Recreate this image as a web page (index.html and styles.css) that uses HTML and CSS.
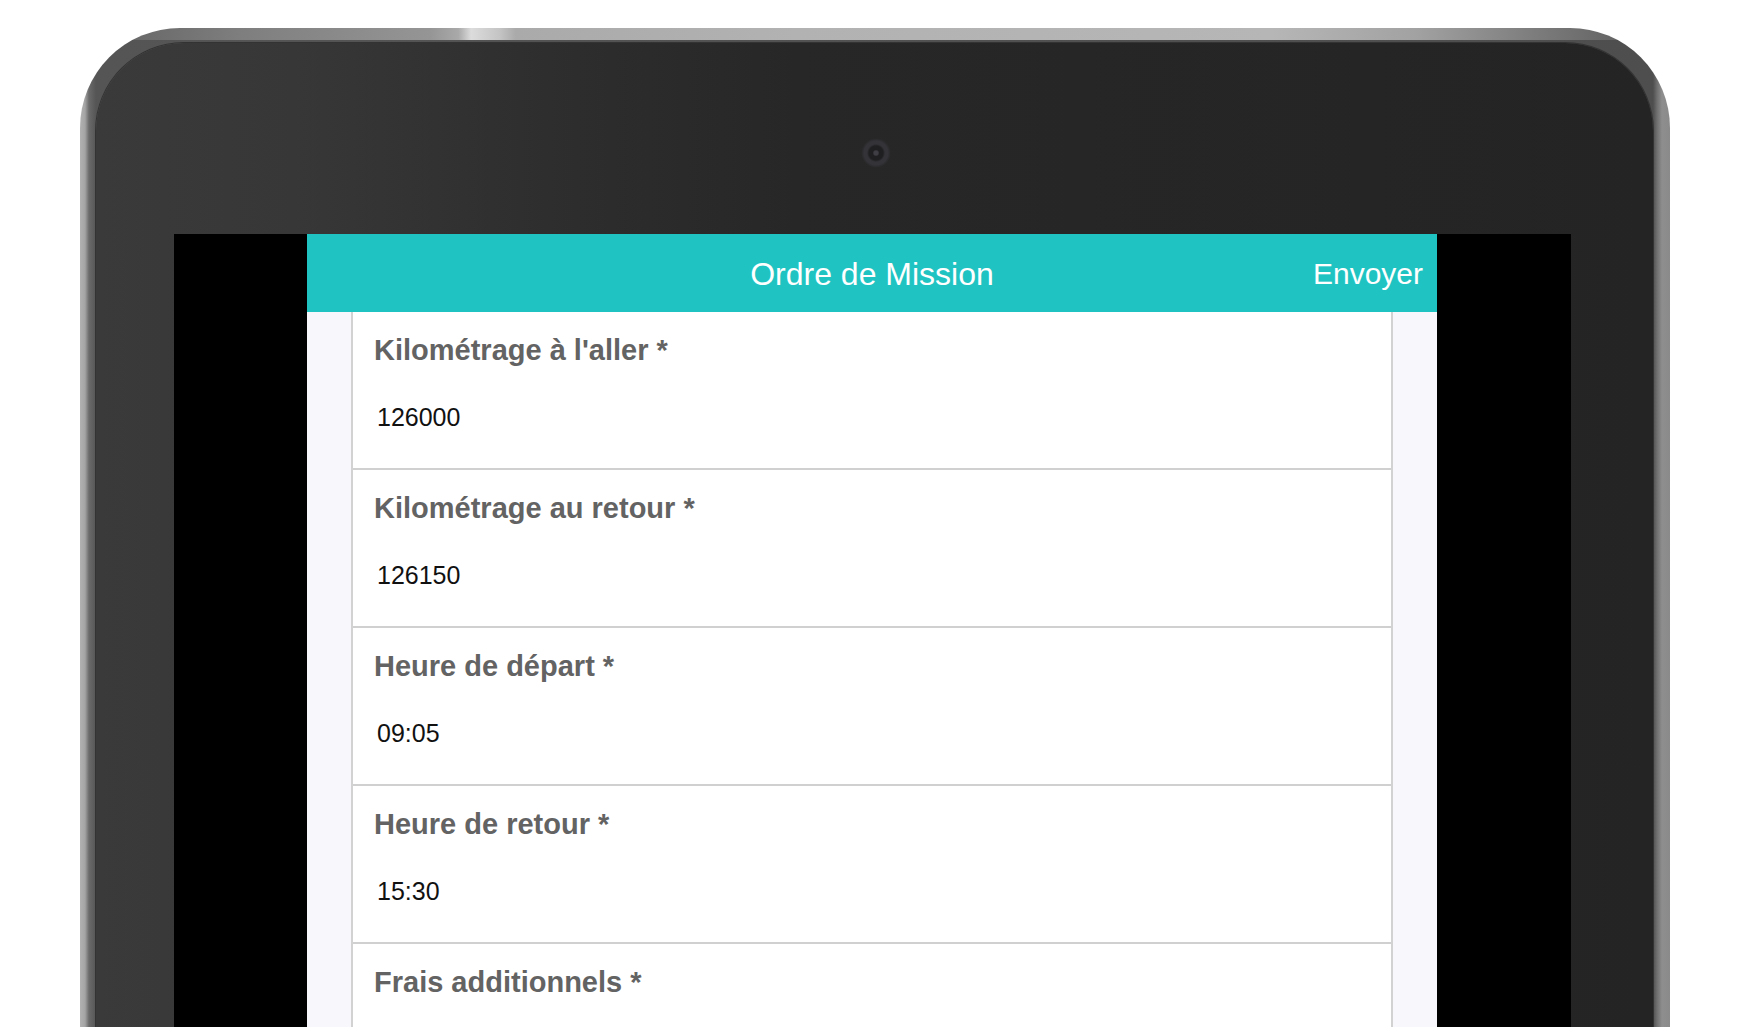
FILE: index.html
```html
<!DOCTYPE html>
<html lang="fr">
<head>
<meta charset="utf-8">
<title>Ordre de Mission</title>
<link rel="stylesheet" href="styles.css">
</head>
<body>
<div class="stage">
  <div class="tablet">
    <div class="bezel">
      <div class="bezel-top"><span class="camera"></span></div>
      <div class="screen">
        <div class="app">
          <header class="bar">
            <span class="bar-side"></span>
            <h1 class="bar-title">Ordre de Mission</h1>
            <button class="bar-action" type="button">Envoyer</button>
          </header>
          <main class="content">
            <div class="card">
              <div class="row">
                <p class="label">Kilométrage à l'aller *</p>
                <div class="value">126000</div>
              </div>
              <div class="row">
                <p class="label">Kilométrage au retour *</p>
                <div class="value">126150</div>
              </div>
              <div class="row">
                <p class="label">Heure de départ *</p>
                <div class="value">09:05</div>
              </div>
              <div class="row">
                <p class="label">Heure de retour *</p>
                <div class="value">15:30</div>
              </div>
              <div class="row">
                <p class="label">Frais additionnels *</p>
                <div class="value"></div>
              </div>
            </div>
          </main>
        </div>
      </div>
    </div>
  </div>
</div>
</body>
</html>
```

FILE: styles.css
```css
html, body {
  margin: 0;
  padding: 0;
  background: #ffffff;
  overflow: hidden;
  height: 100%;
}

body {
  font-family: "Liberation Sans", Arial, sans-serif;
}

.stage {
  padding: 28px 0 0 80px;
}

.tablet {
  width: 1590px;
  height: 1100px;
  box-sizing: border-box;
  padding: 15px 17px 0 16px;
  border-radius: 100px 100px 0 0;
  display: flex;
  flex-direction: column;
  background:
    linear-gradient(90deg,
      #5e5e5e 0%,
      #7e7e7e 10%,
      #959595 22%,
      #a9a9a9 23.8%,
      #dcdcdc 24.6%,
      #c4c4c4 26.4%,
      #aaaaaa 27.4%,
      #b2b2b2 45%,
      #b6b6b6 75%,
      #a2a2a2 84%,
      #7a7a7a 92%,
      #555555 100%) top left / 100% 12px no-repeat,
    linear-gradient(90deg,
      #b2b2b2 0,
      #a4a4a4 5px,
      #6a6a6a 9px,
      #555555 16px,
      #4e4e4e calc(100% - 17px),
      #6f6f6f calc(100% - 13px),
      #8e8e8e calc(100% - 8px),
      #8a8a8a 100%);
}

.bezel {
  flex: 1;
  display: flex;
  flex-direction: column;
  border-radius: 88px 88px 0 0;
  background: linear-gradient(90deg,
    #3a3a3a 0,
    #373737 200px,
    #2d2d2d 480px,
    #272727 700px,
    #242424 100%);
  box-shadow: 0 0 0 1px #333333;
}

.bezel-top {
  height: 191px;
  box-sizing: border-box;
  padding-top: 95px;
  display: flex;
  justify-content: center;
}

.camera {
  width: 30px;
  height: 30px;
  margin-left: 3px;
  border-radius: 50%;
  background: radial-gradient(circle,
    #3e3e44 0 2px,
    #1f1f21 3.5px 7px,
    #333338 9px 12px,
    #2a2a2c 14px,
    #262626 15px);
}

.screen {
  flex: 1;
  margin: 0 82px 0 78px;
  background: #000000;
  display: flex;
}

.app {
  width: 1130px;
  margin-left: 133px;
  display: flex;
  flex-direction: column;
  background: #f8f8fc;
}

.bar {
  height: 78px;
  box-sizing: border-box;
  padding: 20px 14px 0;
  background: #1fc4c2;
  display: grid;
  grid-template-columns: 1fr auto 1fr;
  align-items: start;
  color: #ffffff;
}

.bar-title {
  margin: 0;
  font-size: 32px;
  line-height: 40px;
  font-weight: 400;
}

.bar-action {
  justify-self: end;
  margin: 0;
  padding: 0;
  border: 0;
  background: none;
  color: #ffffff;
  font-family: inherit;
  font-size: 30px;
  line-height: 40px;
  font-weight: 400;
}

.content {
  flex: 1;
  padding: 0 44px;
}

.card {
  background: #ffffff;
  border-left: 2px solid #d2d2d2;
  border-right: 2px solid #d2d2d2;
  min-height: 100%;
}

.row {
  padding: 21px 0 36px 21px;
  border-bottom: 2px solid #d0d0d0;
}

.label {
  margin: 0;
  font-size: 29px;
  line-height: 34px;
  font-weight: 700;
  color: #636363;
}

.value {
  margin-top: 35px;
  padding-left: 3px;
  height: 30px;
  font-size: 25px;
  line-height: 30px;
  color: #111111;
}
```
